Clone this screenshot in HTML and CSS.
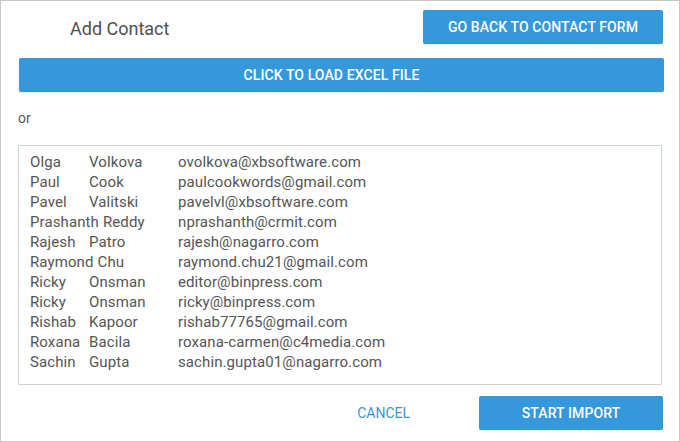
FILE: index.html
```html
<!DOCTYPE html>
<html lang="en">
<head>
  <meta charset="UTF-8">
  <meta name="viewport" content="width=device-width, initial-scale=1.0">
  <title>Add Contact</title>
  <link rel="stylesheet" href="styles.css">
</head>
<body>
  <div class="window">
    <div class="header">
      <h1 class="title">Add Contact</h1>
      <button class="btn btn-back">Go back to contact form</button>
    </div>
    <button class="btn btn-load">Click to load Excel file</button>
    <div class="or">or</div>
    <div class="contacts">
      <div class="row"><span class="name"><span class="first">Olga</span><span>Volkova</span></span><span>ovolkova@xbsoftware.com</span></div>
      <div class="row"><span class="name"><span class="first">Paul</span><span>Cook</span></span><span>paulcookwords@gmail.com</span></div>
      <div class="row"><span class="name"><span class="first">Pavel</span><span>Valitski</span></span><span>pavelvl@xbsoftware.com</span></div>
      <div class="row"><span class="name"><span class="first">Prashanth</span><span>Reddy</span></span><span>nprashanth@crmit.com</span></div>
      <div class="row"><span class="name"><span class="first">Rajesh</span><span>Patro</span></span><span>rajesh@nagarro.com</span></div>
      <div class="row"><span class="name"><span class="first">Raymond</span><span>Chu</span></span><span>raymond.chu21@gmail.com</span></div>
      <div class="row"><span class="name"><span class="first">Ricky</span><span>Onsman</span></span><span>editor@binpress.com</span></div>
      <div class="row"><span class="name"><span class="first">Ricky</span><span>Onsman</span></span><span>ricky@binpress.com</span></div>
      <div class="row"><span class="name"><span class="first">Rishab</span><span>Kapoor</span></span><span>rishab77765@gmail.com</span></div>
      <div class="row"><span class="name"><span class="first">Roxana</span><span>Bacila</span></span><span>roxana-carmen@c4media.com</span></div>
      <div class="row"><span class="name"><span class="first">Sachin</span><span>Gupta</span></span><span>sachin.gupta01@nagarro.com</span></div>
    </div>
    <div class="footer">
      <button class="btn-link">Cancel</button>
      <button class="btn btn-import">Start import</button>
    </div>
  </div>
</body>
</html>
```

FILE: styles.css
```css
:root {
  --blue: #3498db;
  --text: #555;
  --line: #ccd5d5;
}

* {
  margin: 0;
  padding: 0;
  box-sizing: border-box;
}

body {
  font-family: Roboto, "Liberation Sans", Arial, sans-serif;
  color: var(--text);
  background: #fff;
}

.window {
  width: 680px;
  height: 442px;
  border: 1px solid #c8c8c8;
  padding: 9px 16px 0 17px;
  display: flex;
  flex-direction: column;
}

.header {
  display: flex;
  justify-content: space-between;
  align-items: center;
  padding-left: 52px;
}

.title {
  font-size: 18px;
  font-weight: normal;
  color: #4f4f4f;
  margin-top: 2px;
}

.btn {
  background: var(--blue);
  color: #fff;
  border: none;
  border-radius: 2px;
  height: 34px;
  font-family: inherit;
  font-size: 14px;
  font-weight: 500;
  letter-spacing: 0.1px;
  text-transform: uppercase;
  box-shadow: 0 1px 1px rgba(0, 0, 0, 0.08);
  cursor: pointer;
}

.btn-back {
  width: 240px;
}

.btn-load {
  margin: 14px 0 0 1px;
  width: 645px;
  padding-right: 20px;
}

.or {
  font-size: 14px;
  margin: 17px 0 0 0;
  line-height: 18px;
}

.contacts {
  margin-top: 18px;
  width: 644px;
  height: 240px;
  border: 1px solid var(--line);
  padding: 6px 11px;
  font-size: 15px;
  letter-spacing: 0.1px;
  line-height: 20px;
}

.row {
  display: grid;
  grid-template-columns: 144px auto;
  gap: 4px;
  white-space: nowrap;
}

.name {
  display: flex;
  gap: 4px;
}

.first {
  min-width: 55px;
}

.footer {
  display: flex;
  justify-content: flex-end;
  align-items: center;
  gap: 69px;
  margin-top: 11px;
}

.btn-link {
  background: none;
  border: none;
  color: var(--blue);
  font-family: inherit;
  font-size: 14px;
  text-transform: uppercase;
  cursor: pointer;
}

.btn-import {
  width: 184px;
}
```
